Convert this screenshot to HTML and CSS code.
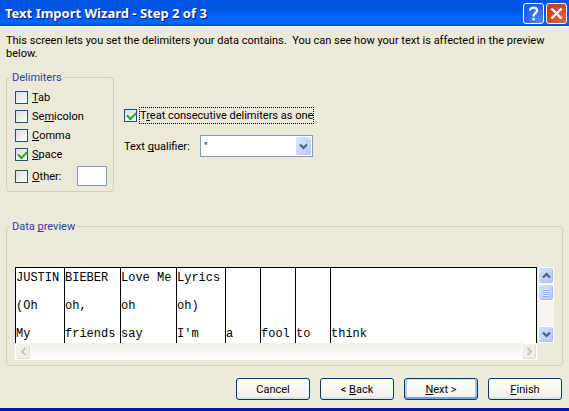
FILE: index.html
```html
<!DOCTYPE html>
<html lang="en">
<head>
<meta charset="utf-8">
<title>Text Import Wizard - Step 2 of 3</title>
<link rel="stylesheet" href="styles.css">
</head>
<body>
<main class="dialog">
  <header class="titlebar">
    <h1 class="title">Text Import Wizard - Step 2 of 3</h1>
    <button class="caption-btn help" type="button" aria-label="Help">
      <svg viewBox="0 0 21 21" width="21" height="21" fill="none" stroke="#fff"><path d="M7 7.5C7 3.6 14 3.6 14 7.6C14 10.2 10.5 10 10.5 13.4" stroke-width="2.2"/><path d="M9.3 15h2.5v2.4H9.3z" fill="#fff" stroke="none"/></svg>
    </button>
    <button class="caption-btn close" type="button" aria-label="Close">
      <svg viewBox="0 0 21 21" width="21" height="21" fill="none" stroke="#fff"><path d="M5.5 5.5l10 10M15.5 5.5l-10 10" stroke-width="2.3"/></svg>
    </button>
  </header>
  <form class="content">
    <p class="intro">This screen lets you set the delimiters your data contains.&nbsp; You can see how your text is affected in the preview below.</p>
    <div class="options">
      <fieldset class="group delimiters">
        <legend>Delimiters</legend>
        <label class="check"><input type="checkbox"><span><u>T</u>ab</span></label>
        <label class="check"><input type="checkbox"><span>Se<u>m</u>icolon</span></label>
        <label class="check"><input type="checkbox"><span><u>C</u>omma</span></label>
        <label class="check"><input type="checkbox" checked><span><u>S</u>pace</span></label>
        <div class="other">
          <label class="check"><input type="checkbox"><span><u>O</u>ther:</span></label>
          <input class="other-text" type="text" aria-label="Other delimiter">
        </div>
      </fieldset>
      <div class="settings">
        <label class="check treat"><input type="checkbox" checked><span class="focus">T<u>r</u>eat consecutive delimiters as one</span></label>
        <div class="qualifier">
          <label for="qualifier">Text <u>q</u>ualifier:</label>
          <div class="combo">
            <select id="qualifier"><option>"</option><option>'</option><option>{none}</option></select>
            <span class="combo-arrow"><svg viewBox="0 0 9 7" width="9" height="7"><path d="M1 1.5l3.5 3.5L8 1.5" fill="none" stroke="#4d6185" stroke-width="2.2"/></svg></span>
          </div>
        </div>
      </div>
    </div>
    <fieldset class="group preview">
      <legend>Data <u>p</u>review</legend>
      <div class="viewer">
        <div class="sheet">
          <table>
            <colgroup><col class="c7"><col class="c8"><col class="c8"><col class="c7"><col class="c5"><col class="c5"><col class="c5"><col></colgroup>
            <tbody>
            <tr><td>JUSTIN</td><td>BIEBER</td><td>Love Me</td><td>Lyrics</td><td></td><td></td><td></td><td></td></tr>
            <tr><td>(Oh</td><td>oh,</td><td>oh</td><td>oh)</td><td></td><td></td><td></td><td></td></tr>
            <tr><td>My</td><td>friends</td><td>say</td><td>I'm</td><td>a</td><td>fool</td><td>to</td><td>think</td></tr>
            </tbody>
          </table>
        </div>
        <div class="vscroll">
          <button class="arrow" type="button" aria-label="Scroll up"><svg viewBox="0 0 9 7" width="9" height="7"><path d="M1 5.5L4.5 2L8 5.5" fill="none" stroke="#4d6185" stroke-width="2.2"/></svg></button>
          <div class="thumb"><svg viewBox="0 0 6 8" width="6" height="8"><path d="M0 .5h6M0 2.5h6M0 4.5h6M0 6.5h6" stroke="#eef4fe"/><path d="M0 1.5h6M0 3.5h6M0 5.5h6M0 7.5h6" stroke="#8ca6e6"/></svg></div>
          <button class="arrow down" type="button" aria-label="Scroll down"><svg viewBox="0 0 9 7" width="9" height="7"><path d="M1 1.5l3.5 3.5L8 1.5" fill="none" stroke="#4d6185" stroke-width="2.2"/></svg></button>
        </div>
        <div class="hscroll">
          <button class="arrow" type="button" aria-label="Scroll left" disabled><svg viewBox="0 0 7 9" width="7" height="9"><path d="M5.5 1L2 4.5L5.5 8" fill="none" stroke="#c5c4b8" stroke-width="2"/></svg></button>
          <button class="arrow" type="button" aria-label="Scroll right" disabled><svg viewBox="0 0 7 9" width="7" height="9"><path d="M1.5 1L5 4.5L1.5 8" fill="none" stroke="#c5c4b8" stroke-width="2"/></svg></button>
        </div>
      </div>
    </fieldset>
    <footer class="actions">
      <button class="btn" type="button">Cancel</button>
      <button class="btn" type="button">&lt; <u>B</u>ack</button>
      <button class="btn default" type="button"><u>N</u>ext &gt;</button>
      <button class="btn" type="button"><u>F</u>inish</button>
    </footer>
  </form>
</main>
</body>
</html>
```
FILE: styles.css
```css
* { box-sizing: border-box; }

body {
  margin: 0;
  background: #ece9d8;
  color: #000;
  font: 11px/13px Tahoma, Roboto, sans-serif;
}

button, input, select { font: inherit; color: inherit; margin: 0; }
u { text-underline-offset: 1px; text-decoration-thickness: 1px; text-decoration-skip-ink: none; }

.dialog {
  display: flex;
  flex-direction: column;
  min-height: 100vh;
  border-bottom: 3px solid #0019a8;
}

.titlebar {
  display: flex;
  align-items: center;
  gap: 2px;
  height: 26px;
  padding: 0 2px 0 5px;
  background: linear-gradient(#0058e6 0, #0054e3 40%, #0061fb 65%, #0066ff 88%, #0046cc 100%);
}

.title {
  flex: 1;
  margin: 0;
  color: #fff;
  font: bold 13px/20px "Noto Sans", sans-serif;
  text-shadow: 1px 1px 1px #0a1883;
}

.caption-btn {
  width: 21px;
  height: 21px;
  padding: 0;
  border: 1px solid #fff;
  border-radius: 3px;
}
.caption-btn svg { display: block; margin: -1px; }
.help { background: radial-gradient(circle at 75% 80%, #4a88f5, #2459d8 75%); }
.close { background: radial-gradient(circle at 75% 80%, #e0613c, #cf4124 75%); }

.content {
  flex: 1;
  display: flex;
  flex-direction: column;
  padding: 7px 6px 8px;
  border-top: 1px solid #f8f8f4;
}

.intro { margin: 0; }

.options {
  display: flex;
  gap: 10px;
  margin-top: 11px;
}

.group {
  min-width: 0;
  margin: 0;
  border: 1px solid #d0d0bf;
  border-radius: 4px;
}
.group legend {
  margin-left: -5px;
  padding: 0 2px;
  color: #1c459f;
}

.delimiters {
  display: flex;
  flex-direction: column;
  width: 108px;
  padding: 4px 6px 5px 8px;
}

.check {
  display: flex;
  align-items: center;
  gap: 4px;
  height: 19px;
}

input[type="checkbox"] {
  appearance: none;
  flex: none;
  width: 13px;
  height: 13px;
  border: 1px solid #1c5180;
  background: linear-gradient(135deg, #dcdcd7, #fff);
}
input[type="checkbox"]:checked::before {
  content: "";
  display: block;
  width: 7px;
  height: 4px;
  margin: 2px;
  border: solid #21a121;
  border-width: 0 0 2px 2px;
  transform: rotate(-45deg);
}

.other {
  display: flex;
  align-items: center;
  justify-content: space-between;
  margin-top: 2px;
}
.other-text {
  width: 30px;
  height: 20px;
  padding: 2px;
  border: 1px solid #7f9db9;
  background: #fff;
}

.settings {
  display: flex;
  flex-direction: column;
  gap: 10px;
  width: 189px;
  padding-top: 35px;
}
.treat { gap: 2px; }
.focus {
  flex: none;
  padding: 1px 0;
  border: 1px dotted #000;
  white-space: nowrap;
}
.qualifier {
  display: flex;
  align-items: center;
  justify-content: space-between;
}
.combo { position: relative; }
.combo select {
  display: block;
  appearance: none;
  width: 113px;
  height: 22px;
  padding: 0 20px 0 3px;
  border: 1px solid #7f9db9;
  border-radius: 0;
  background: #fff;
}
.combo-arrow {
  position: absolute;
  top: 2px;
  right: 2px;
  display: grid;
  place-items: center;
  width: 15px;
  height: 18px;
  border-radius: 2px;
  background: linear-gradient(135deg, #dbe6fd, #b3c8f6);
  pointer-events: none;
}

.preview {
  margin-top: 28px;
  padding: 34px 8px 5px;
}
.viewer {
  display: grid;
  grid-template-columns: 1fr 17px;
}
.sheet {
  height: 76px;
  overflow: hidden;
  border: solid #000;
  border-width: 1px 1px 0 0;
  background: #fff;
}
.sheet table {
  width: 100%;
  table-layout: fixed;
  border-spacing: 0;
  font: 12px/20px "Courier New", "Liberation Mono", monospace;
}
.sheet td {
  height: 28px;
  padding: 0;
  border-left: 1px solid #000;
  vertical-align: top;
  white-space: nowrap;
}
.c5 { width: 35px; }
.c7 { width: 49px; }
.c8 { width: 56px; }

.vscroll {
  display: flex;
  flex-direction: column;
  margin-left: 1px;
  background: #f6f5ef;
}
.arrow, .thumb {
  display: grid;
  place-items: center;
  width: 16px;
  height: 17px;
  padding: 0;
  border: 1px solid #fff;
  border-radius: 3px;
  background: linear-gradient(135deg, #d3e0fe, #b5c8f5);
  box-shadow: inset -1px -1px #a5bbec;
}
.down { margin-top: auto; }

.hscroll {
  display: flex;
  justify-content: space-between;
  height: 17px;
  background: linear-gradient(#efeee8, #fffffc);
}
.hscroll .arrow {
  background: #f1f0e8;
  box-shadow: inset -1px -1px #dddbce;
}

.actions {
  display: flex;
  justify-content: flex-end;
  gap: 10px;
  margin-top: 12px;
  padding-right: 1px;
}
.btn {
  width: 74px;
  height: 22px;
  padding: 0;
  border: 1px solid #003c74;
  border-radius: 3px;
  background: linear-gradient(#fff, #f3f2ec 85%, #dcd7cb);
}
.default { box-shadow: inset 0 1px #cee7ff, inset 0 -2px #7e9fe0, inset 2px 0 #b5cbf3, inset -2px 0 #a5bfef; }
```
